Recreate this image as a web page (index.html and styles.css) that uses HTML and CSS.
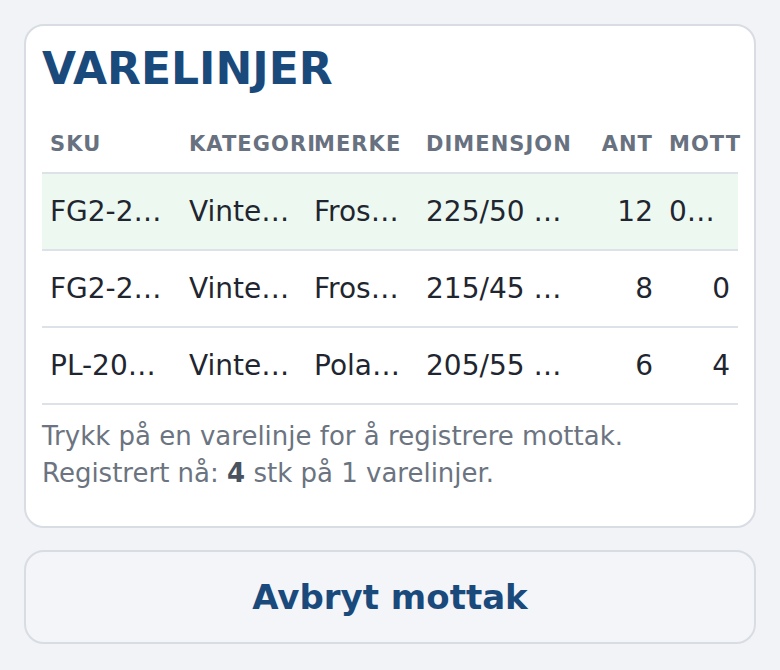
FILE: index.html
```html
<!DOCTYPE html>
<html lang="no">
<head>
    <meta charset="UTF-8">
    <meta name="viewport" content="width=device-width, initial-scale=1.0">
    <title>Varemottak</title>
    <link rel="stylesheet" href="styles.css">
</head>
<body>
    <div class="page">
        <section class="card">
            <h1 class="card-title">VARELINJER</h1>

            <table class="lines">
                <colgroup>
                    <col class="col-sku">
                    <col class="col-cat">
                    <col class="col-brand">
                    <col class="col-dim">
                    <col class="col-qty">
                    <col class="col-recv">
                </colgroup>
                <thead>
                    <tr>
                        <th>SKU</th>
                        <th>KATEGORI</th>
                        <th>MERKE</th>
                        <th>DIMENSJON</th>
                        <th class="num">ANT</th>
                        <th class="num">MOTT</th>
                    </tr>
                </thead>
                <tbody>
                    <tr class="selected">
                        <td>FG2-2255017</td>
                        <td>Vinterdekk</td>
                        <td>Frostgrip 2</td>
                        <td>225/50 R17</td>
                        <td class="num">12</td>
                        <td class="num">0+4 stk</td>
                    </tr>
                    <tr>
                        <td>FG2-2154518</td>
                        <td>Vinterdekk</td>
                        <td>Frostgrip 2</td>
                        <td>215/45 R18</td>
                        <td class="num">8</td>
                        <td class="num">0</td>
                    </tr>
                    <tr>
                        <td>PL-2055516</td>
                        <td>Vinterdekk</td>
                        <td>Polaris</td>
                        <td>205/55 R16</td>
                        <td class="num">6</td>
                        <td class="num">4</td>
                    </tr>
                </tbody>
            </table>

            <p class="hint">
                Trykk på en varelinje for å registrere mottak.<br>
                Registrert nå: <strong>4</strong> stk på 1 varelinjer.
            </p>
        </section>

        <button class="cancel">Avbryt mottak</button>
    </div>
</body>
</html>
```

FILE: styles.css
```css
* { box-sizing: border-box; }

body {
    margin: 0;
    background: #f2f3f6;
    font-family: "DejaVu Sans", Verdana, sans-serif;
    color: #1f2630;
}

.page {
    padding: 24px;
    display: flex;
    flex-direction: column;
    gap: 22px;
}

.card {
    background: #fff;
    border: 2px solid #d8dce3;
    border-radius: 20px;
    padding: 17px 16px 16px;
}

.card-title {
    margin: 0 0 26px;
    font-size: 44px;
    font-weight: bold;
    line-height: normal;
    color: #1a4a7c;
}

.lines {
    width: 100%;
    table-layout: fixed;
    border-collapse: collapse;
}

.col-sku { width: 139px; }
.col-cat { width: 125px; }
.col-brand { width: 112px; }
.col-dim { width: 168px; }
.col-qty { width: 75px; }
.col-recv { width: 77px; }

.lines th {
    padding: 12px 8px 16px;
    font-size: 21px;
    line-height: 24px;
    font-weight: bold;
    letter-spacing: 0.05em;
    color: #687180;
    text-align: left;
    white-space: nowrap;
    border-bottom: 2px solid #dde2e8;
}

.lines td {
    padding: 21px 14px 21px 8px;
    font-size: 28px;
    line-height: 33px;
    white-space: nowrap;
    overflow: hidden;
    text-overflow: ellipsis;
    border-bottom: 2px solid #dde2e8;
}

.lines .num { text-align: right; }

.lines td.num { padding-right: 8px; }

.lines tr.selected td { background: #edf9f0; }

.hint {
    margin: 13px 0 18px;
    font-size: 26px;
    line-height: 37px;
    color: #6b7480;
}

.hint strong { color: #4a5260; }

.cancel {
    height: 94px;
    border: 2px solid #d8dce3;
    border-radius: 20px;
    background: #f4f5f8;
    font-family: "DejaVu Sans", Verdana, sans-serif;
    font-size: 34px;
    font-weight: bold;
    color: #1a4a7c;
    cursor: pointer;
}
```
